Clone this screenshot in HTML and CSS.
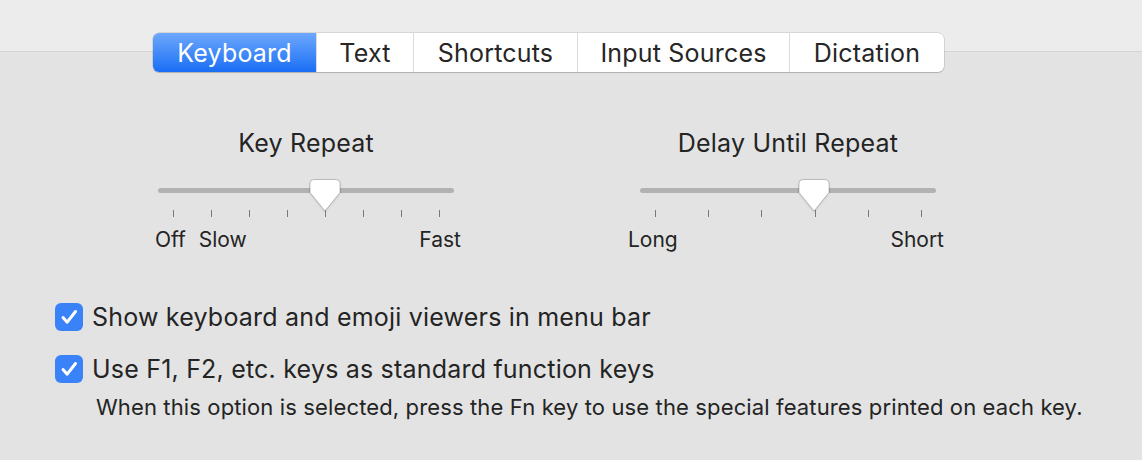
FILE: index.html
```html
<!DOCTYPE html>
<html lang="en">
<head>
    <meta charset="UTF-8">
    <title>Keyboard</title>
    <link rel="stylesheet" href="styles.css">
</head>
<body>
    <div class="toolbar"></div>
    <div class="tabs">
        <div class="tab tab-keyboard selected">Keyboard</div>
        <div class="tab tab-text">Text</div>
        <div class="tab tab-shortcuts">Shortcuts</div>
        <div class="tab tab-input">Input Sources</div>
        <div class="tab tab-dictation">Dictation</div>
    </div>

    <div class="sliders">
        <div class="slider-group">
            <div class="slider-title">Key Repeat</div>
            <div class="track">
                <svg class="thumb" style="left: 151px" width="32" height="34" viewBox="0 0 32 34">
                    <path d="M5 0.5 H27 Q31 0.5 31 4.5 V13.5 L16 32 L1 13.5 V4.5 Q1 0.5 5 0.5 Z" fill="#fff" stroke="rgba(0,0,0,0.22)" stroke-width="1"/>
                </svg>
            </div>
            <div class="ticks">
                <span></span><span></span><span></span><span></span>
                <span></span><span></span><span></span><span></span>
            </div>
            <div class="labels labels-repeat">
                <span>Off</span>
                <span class="label-slow">Slow</span>
                <span class="label-end">Fast</span>
            </div>
        </div>

        <div class="slider-group">
            <div class="slider-title">Delay Until Repeat</div>
            <div class="track">
                <svg class="thumb" style="left: 158px" width="32" height="34" viewBox="0 0 32 34">
                    <path d="M5 0.5 H27 Q31 0.5 31 4.5 V13.5 L16 32 L1 13.5 V4.5 Q1 0.5 5 0.5 Z" fill="#fff" stroke="rgba(0,0,0,0.22)" stroke-width="1"/>
                </svg>
            </div>
            <div class="ticks">
                <span></span><span></span><span></span>
                <span></span><span></span><span></span>
            </div>
            <div class="labels labels-delay">
                <span>Long</span>
                <span class="label-end">Short</span>
            </div>
        </div>
    </div>

    <div class="options">
        <div class="option">
            <span class="checkbox">
                <svg width="28" height="28" viewBox="0 0 28 28">
                    <path d="M8 14.5 L12.2 19.2 L20.5 8.5" fill="none" stroke="#fff" stroke-width="3" stroke-linecap="round" stroke-linejoin="round"/>
                </svg>
            </span>
            <span>Show keyboard and emoji viewers in menu bar</span>
        </div>
        <div class="option">
            <span class="checkbox">
                <svg width="28" height="28" viewBox="0 0 28 28">
                    <path d="M8 14.5 L12.2 19.2 L20.5 8.5" fill="none" stroke="#fff" stroke-width="3" stroke-linecap="round" stroke-linejoin="round"/>
                </svg>
            </span>
            <span>Use F1, F2, etc. keys as standard function keys</span>
        </div>
        <div class="help">When this option is selected, press the Fn key to use the special features printed on each key.</div>
    </div>
</body>
</html>
```

FILE: styles.css
```css
body {
    margin: 0;
    width: 1142px;
    height: 460px;
    overflow: hidden;
    background-color: #e3e3e3;
    color: #242424;
    font-family: Inter, "Noto Sans", sans-serif;
}

.toolbar {
    height: 51px;
    background-color: #ececec;
    border-bottom: 1px solid #d5d5d5;
}

.tabs {
    display: flex;
    width: 791px;
    height: 39px;
    margin: -19px 0 0 153px;
    background: #fff;
    border-radius: 6px;
    box-shadow: 0 0 0 0.5px rgba(0, 0, 0, 0.18), 0 1px 1px rgba(0, 0, 0, 0.15);
}

.tab {
    display: flex;
    align-items: center;
    justify-content: center;
    font-size: 25px;
    letter-spacing: 0.2px;
    color: #262626;
    border-left: 1px solid #dcdcdc;
    box-sizing: border-box;
}

.tab:first-child {
    border-left: none;
}

.tab:last-child {
    border-radius: 0 6px 6px 0;
}

.tab.selected {
    color: #fff;
    background: linear-gradient(#6da8fb, #1a6ef6);
    border-radius: 6px 0 0 6px;
}

.tab-keyboard { width: 163px; }
.tab-text { width: 97px; }
.tab-shortcuts { width: 164px; }
.tab-input { width: 212px; }
.tab-dictation { width: 155px; }

.sliders {
    display: flex;
    gap: 162px;
    padding-left: 146px;
    margin-top: 56px;
}

.slider-group {
    width: 320px;
    display: flex;
    flex-direction: column;
}

.slider-title {
    text-align: center;
    font-size: 25px;
    letter-spacing: 0.2px;
    line-height: 30px;
}

.track {
    position: relative;
    height: 5px;
    margin: 30px 12px 0;
    background: #b2b2b2;
    border-radius: 3px;
}

.thumb {
    position: absolute;
    top: -9px;
    filter: drop-shadow(0 1px 1px rgba(0, 0, 0, 0.12));
}

.ticks {
    display: flex;
    justify-content: space-between;
    margin: 17px 26px 0 27px;
}

.ticks span {
    width: 1px;
    height: 7px;
    background: #7a7a7a;
}

.labels {
    display: flex;
    font-size: 21px;
    line-height: 24px;
    margin-top: 11px;
}

.labels-repeat {
    padding: 0 5px 0 9px;
}

.labels-delay {
    padding: 0 4px 0 0;
}

.label-slow {
    margin-left: 13px;
}

.label-end {
    margin-left: auto;
}

.options {
    margin-top: 51px;
    padding-left: 55px;
}

.option {
    display: flex;
    align-items: center;
    gap: 9px;
    font-size: 25px;
    letter-spacing: 0.2px;
    line-height: 28px;
    margin-bottom: 24px;
}

.option:nth-child(2) {
    margin-bottom: 11px;
}

.checkbox {
    width: 28px;
    height: 28px;
    border-radius: 6px;
    background: #3a82f7;
    display: flex;
}

.help {
    padding-left: 41px;
    font-size: 22px;
    letter-spacing: 0.13px;
    line-height: 26px;
}
```
